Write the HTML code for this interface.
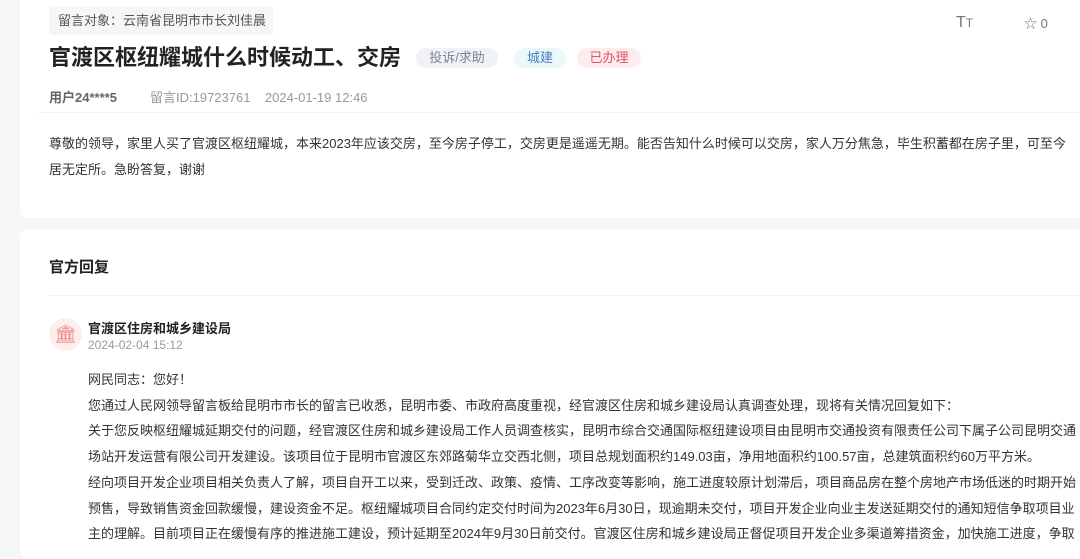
<!DOCTYPE html>
<html><head><meta charset="utf-8"><style>
*{margin:0;padding:0;box-sizing:border-box}
body{width:1080px;height:539px;overflow:hidden;background:#f5f6f8;font-family:"Liberation Sans","Noto Sans CJK SC",sans-serif;color:#333;position:relative}
.card{position:absolute;left:20px;width:1070px;background:#fff;border-radius:8px}
.abs{position:absolute;white-space:nowrap}
.tag{position:absolute;top:48px;height:20px;line-height:20px;border-radius:10px;font-size:13px;text-align:center}
.p{font-size:13px;line-height:25.7px;color:#333}
</style></head><body>
<div class="card" style="top:-10px;height:228px"></div>
<div class="card" style="top:229px;height:330px"></div>

<div class="abs" style="left:49px;top:7px;height:28px;width:224px;background:#f5f6f8;border-radius:3px;font-size:13px;line-height:28px;padding-left:9px;color:#555">留言对象：云南省昆明市市长刘佳晨</div>
<div class="abs" style="left:49px;top:42px;font-size:22px;font-weight:bold;color:#222;line-height:32px">官渡区枢纽耀城什么时候动工、交房</div>
<div class="tag" style="left:416px;width:82px;background:#f0f2f7;color:#7b8494">投诉/求助</div>
<div class="tag" style="left:514px;width:52px;background:#ebf8f8;color:#4a7fc4">城建</div>
<div class="tag" style="left:577px;width:64px;background:#fdecee;color:#e0525f">已办理</div>
<div class="abs" style="left:49px;top:87px;font-size:13px;font-weight:bold;color:#666">用户24****5</div>
<div class="abs" style="left:150px;top:87px;font-size:13px;color:#999">留言ID:19723761&nbsp;&nbsp;&nbsp;&nbsp;2024-01-19 12:46</div>
<div class="abs" style="left:956px;top:14px;font-size:16px;color:#777">T<span style="font-size:12px">T</span></div>
<div class="abs" style="left:1024px;top:13px;font-size:13px;color:#777">☆ 0</div>
<div class="abs" style="left:38px;top:112px;width:1042px;height:1px;background:#f0f0f0"></div>
<div class="abs p" style="left:49px;top:131px;width:1024px;white-space:normal">尊敬的领导，家里人买了官渡区枢纽耀城，本来2023年应该交房，至今房子停工，交房更是遥遥无期。能否告知什么时候可以交房，家人万分焦急，毕生积蓄都在房子里，可至今居无定所。急盼答复，谢谢</div>

<div class="abs" style="left:49px;top:256px;font-size:15px;font-weight:bold;color:#222">官方回复</div>
<div class="abs" style="left:48px;top:295px;width:1032px;height:1px;background:#f0f0f0"></div>
<div class="abs" style="left:49px;top:318px;width:33px;height:33px;border-radius:50%;background:#fdeeee;color:#e88;font-size:18px;text-align:center;line-height:33px">🏛</div>
<div class="abs" style="left:88px;top:318px;font-size:13px;font-weight:bold;color:#222">官渡区住房和城乡建设局</div>
<div class="abs" style="left:88px;top:338px;font-size:12px;color:#999">2024-02-04 15:12</div>
<div class="abs p" style="left:88px;top:367px;width:988px;white-space:normal">网民同志：您好！<br>您通过人民网领导留言板给昆明市市长的留言已收悉，昆明市委、市政府高度重视，经官渡区住房和城乡建设局认真调查处理，现将有关情况回复如下：<br>关于您反映枢纽耀城延期交付的问题，经官渡区住房和城乡建设局工作人员调查核实，昆明市综合交通国际枢纽建设项目由昆明市交通投资有限责任公司下属子公司昆明交通场站开发运营有限公司开发建设。该项目位于昆明市官渡区东郊路菊华立交西北侧，项目总规划面积约149.03亩，净用地面积约100.57亩，总建筑面积约60万平方米。<br>经向项目开发企业项目相关负责人了解，项目自开工以来，受到迁改、政策、疫情、工序改变等影响，施工进度较原计划滞后，项目商品房在整个房地产市场低迷的时期开始预售，导致销售资金回款缓慢，建设资金不足。枢纽耀城项目合同约定交付时间为2023年6月30日，现逾期未交付，项目开发企业向业主发送延期交付的通知短信争取项目业主的理解。目前项目正在缓慢有序的推进施工建设，预计延期至2024年9月30日前交付。官渡区住房和城乡建设局正督促项目开发企业多渠道筹措资金，加快施工进度，争取</div>
</body></html>
